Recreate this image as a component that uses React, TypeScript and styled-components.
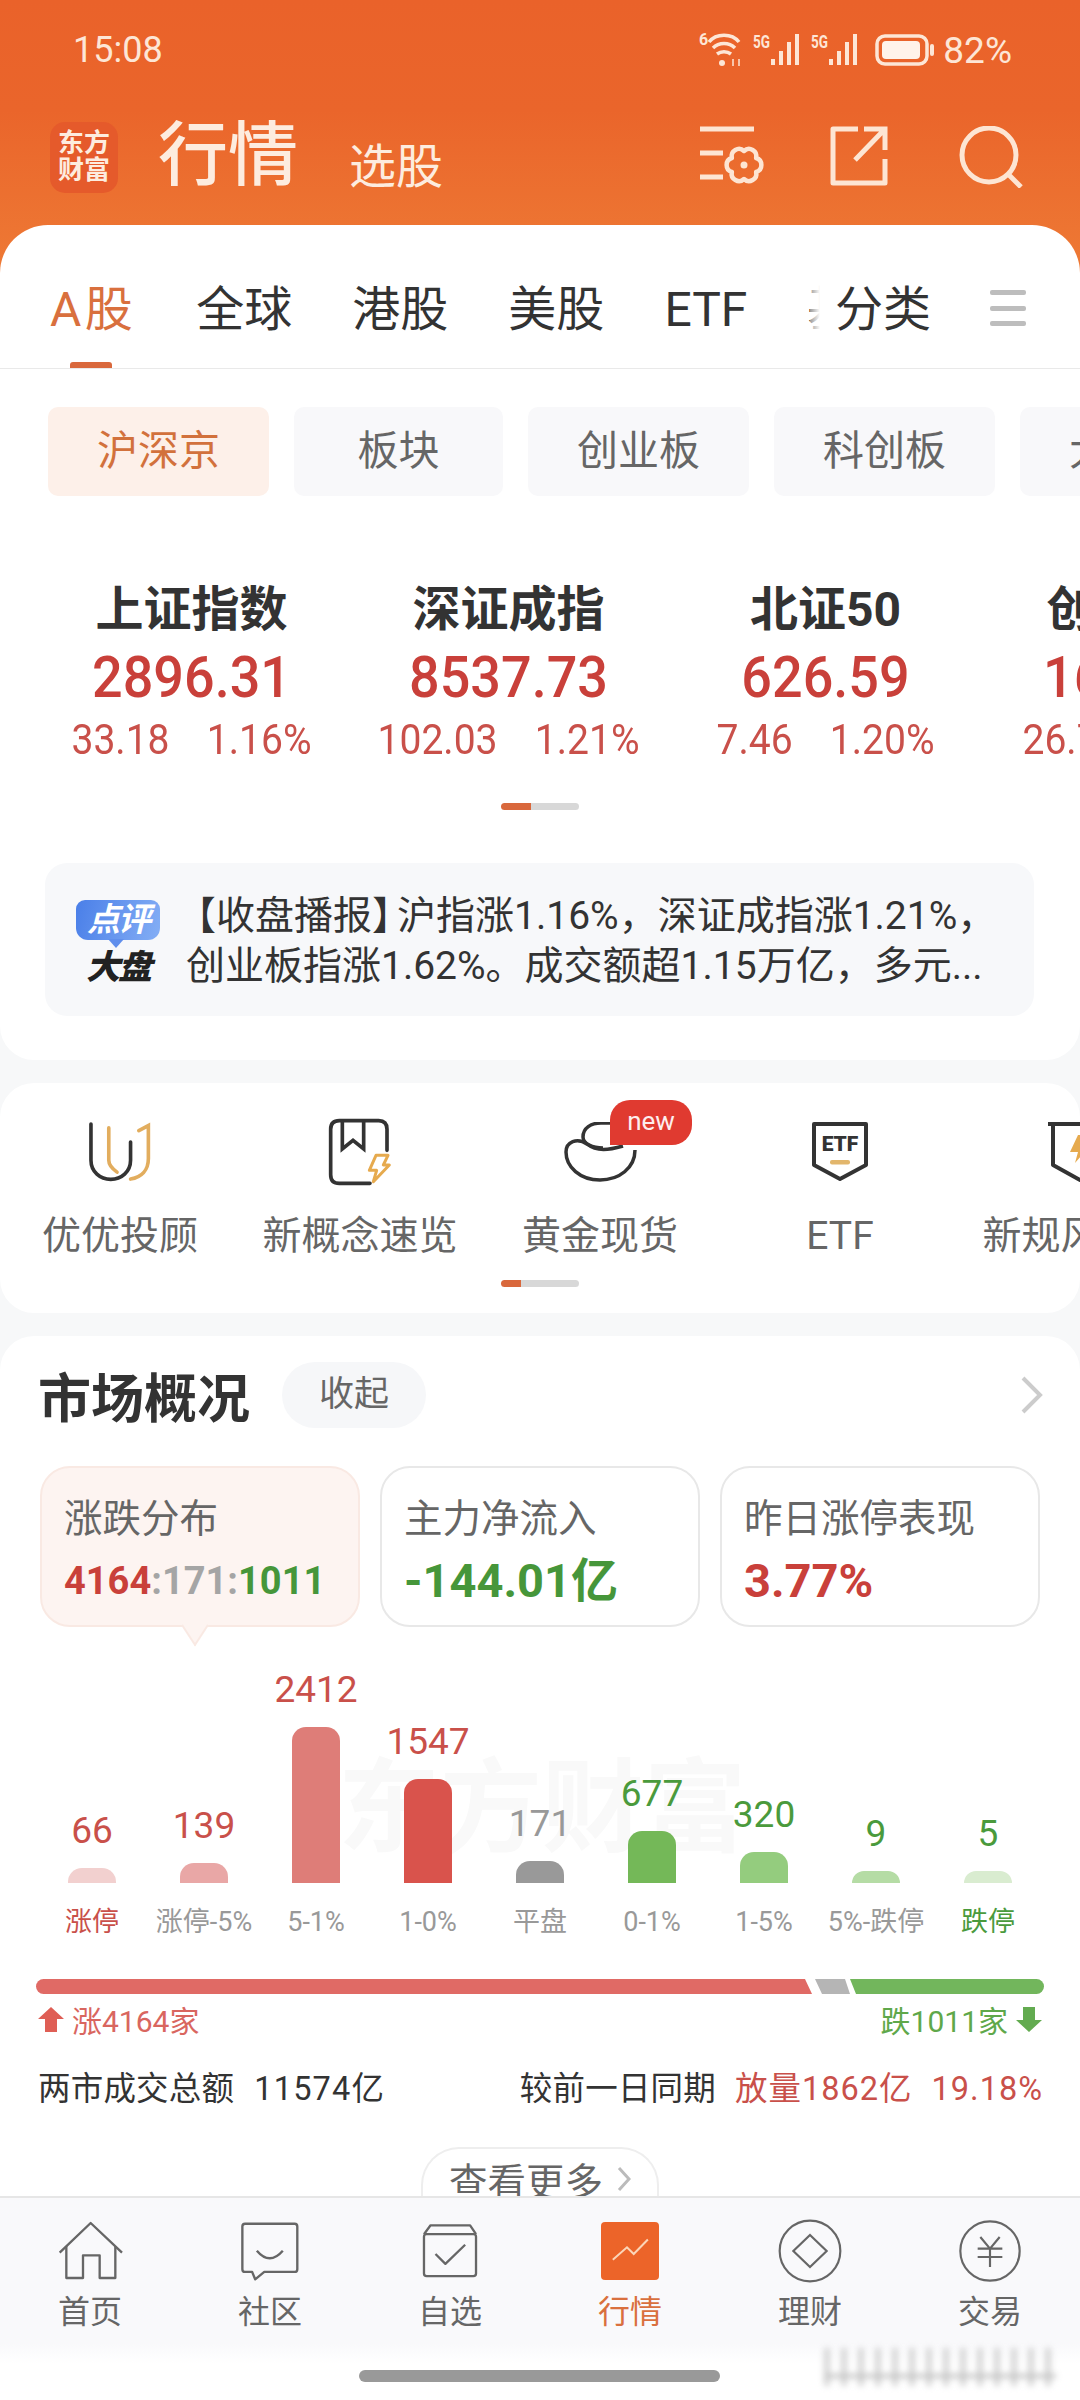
import styled, { createGlobalStyle } from "styled-components";

const GlobalStyle = createGlobalStyle`
  html, body {
    margin: 0;
    padding: 0;
    background: #fff;
    font-family: Roboto, "Noto Sans CJK SC", sans-serif;
    color: #333;
  }
`;

const Page = styled.div`
  width: 1080px;
  height: 2400px;
  display: flex;
  flex-direction: column;
  overflow: hidden;
  background: linear-gradient(#ea622a 0, #ea652b 110px, #ee7a35 275px, #f7f8f9 275px);
`;

const Scroll = styled.div`
  height: 2196px;
  flex: none;
  overflow: hidden;
`;

const StatusBar = styled.div`
  height: 100px;
  display: flex;
  align-items: center;
  justify-content: space-between;
  padding: 0 68px 0 73px;
  color: #fde6d6;
  font-size: 36px;
`;

const StatusIcons = styled.div`
  display: flex;
  align-items: center;
  gap: 8px;
  font-size: 37px;
`;

const BatteryWrap = styled.div`
  display: flex;
  margin-left: 6px;
`;

const TitleBar = styled.div`
  height: 125px;
  display: flex;
  padding-left: 50px;
  color: #fdecdf;
`;

const Logo = styled.div`
  width: 68px;
  height: 71px;
  margin-top: 22px;
  border-radius: 15px;
  background: #e55a2b;
  font-size: 26px;
  line-height: 27px;
  font-weight: 700;
  text-align: center;
  padding-top: 8px;
  box-sizing: border-box;
`;

const PageTitle = styled.div`
  margin-left: 40px;
  font-size: 70px;
  line-height: 112px;
  font-weight: 500;
`;

const SubTitle = styled.div`
  margin-left: 51px;
  font-size: 47px;
  line-height: 134px;
`;

const HeadIcons = styled.div`
  margin-left: auto;
  margin-right: 57px;
  display: flex;
  align-items: flex-start;
  gap: 65px;
  padding-top: 26px;
  svg:last-child {
    margin-left: 6px;
  }
`;

const Card = styled.section`
  background: #fff;
  border-radius: 34px;
  margin-top: 23px;
`;

const MainCard = styled(Card)`
  margin-top: 0;
  border-radius: 48px 48px 34px 34px;
  padding-bottom: 44px;
`;

const TabRow = styled.div`
  height: 144px;
  box-sizing: border-box;
  border-bottom: 1.5px solid #e9e9e9;
  display: flex;
  align-items: flex-start;
  padding: 58px 54px 0 50px;
`;

const TabScroller = styled.div`
  position: relative;
  flex: none;
  width: 770px;
  height: 85px;
  display: flex;
  gap: 60px;
  overflow: hidden;
  &::after {
    content: "";
    position: absolute;
    right: 0;
    top: 0;
    height: 60px;
    width: 10px;
    background: linear-gradient(90deg, rgba(255, 255, 255, 0.5), #fff);
  }
`;

const Tab = styled.div<{ $active?: boolean }>`
  position: relative;
  flex: none;
  height: 85px;
  font-size: 48px;
  line-height: 54px;
  color: ${(p) => (p.$active ? "#d9703e" : "#333")};
  letter-spacing: ${(p) => (p.$active ? "3.5px" : "0")};
  ${(p) =>
    p.$active &&
    `&::after {
      content: "";
      position: absolute;
      left: 20px;
      bottom: 0;
      width: 42px;
      height: 6px;
      border-radius: 3px 3px 0 0;
      background: #d9683c;
    }`}
`;

const FixedTab = styled(Tab)`
  margin-left: 15px;
`;

const MenuBars = styled.div`
  margin-left: auto;
  width: 36px;
  height: 36px;
  margin-top: 7px;
  display: flex;
  flex-direction: column;
  justify-content: space-between;
  i {
    display: block;
    height: 5px;
    border-radius: 2px;
    background: #bdbdbd;
  }
`;

const ChipRow = styled.div`
  display: flex;
  gap: 25px;
  margin-top: 38px;
  padding-left: 48px;
  overflow: hidden;
`;

const Chip = styled.div<{ $active?: boolean }>`
  flex: none;
  min-width: 209px;
  height: 89px;
  box-sizing: border-box;
  padding: 0 49px;
  border-radius: 10px;
  text-align: center;
  font-size: 41px;
  line-height: 89px;
  background: ${(p) => (p.$active ? "#fdf0e9" : "#f8f8fa")};
  color: ${(p) => (p.$active ? "#d2713c" : "#666")};
`;

const IndexRow = styled.div`
  display: flex;
  margin-top: 84px;
  padding-left: 33px;
  overflow: hidden;
`;

const IndexCell = styled.div`
  flex: none;
  width: 317px;
  text-align: center;
  white-space: nowrap;
`;

const IndexName = styled.div`
  font-size: 48px;
  line-height: 60px;
  font-weight: 700;
  color: #333;
`;

const IndexValue = styled.div`
  font-size: 58px;
  line-height: 74px;
  font-weight: 500;
  color: #c9403a;
  transform: scaleX(0.93);
`;

const IndexChange = styled.div`
  font-size: 42px;
  line-height: 52px;
  color: #c9504a;
  display: flex;
  justify-content: center;
  gap: 40px;
  transform: scaleX(0.93);
`;

const Pager = styled.div<{ $fill: number; $top: number }>`
  width: 78px;
  height: 7px;
  margin: ${(p) => p.$top}px auto 0;
  border-radius: 4px;
  background: linear-gradient(90deg, #d9683c ${(p) => p.$fill}px, #d8d8d8 ${(p) => p.$fill}px);
`;

const News = styled.div`
  height: 153px;
  margin: 53px 46px 0 45px;
  border-radius: 22px;
  background: #f7f8fa;
  display: flex;
  padding-left: 31px;
`;

const NewsBadge = styled.div`
  flex: none;
  width: 84px;
  padding-top: 37px;
  text-align: center;
  font-weight: 700;
  font-style: italic;
`;

const NewsBubble = styled.div`
  position: relative;
  height: 40px;
  border-radius: 9px 9px 12px 12px;
  background: linear-gradient(105deg, #4a7fe8, #84aef5);
  color: #fff;
  font-size: 33px;
  letter-spacing: -2px;
  line-height: 40px;
  &::after {
    content: "";
    position: absolute;
    left: 32px;
    bottom: -8px;
    border-left: 8px solid transparent;
    border-right: 8px solid transparent;
    border-top: 9px solid #5f8eec;
  }
`;

const NewsBig = styled.div`
  margin-top: 12px;
  font-size: 34px;
  letter-spacing: -2px;
  line-height: 30px;
  font-weight: 900;
  color: #222;
`;

const NewsText = styled.div`
  margin-left: 26px;
  padding-top: 28px;
  font-size: 39px;
  line-height: 50px;
  color: #333;
  white-space: nowrap;
`;

const OpenBracket = styled.span`
  margin-left: -9px;
`;

const CloseBracket = styled.span`
  margin-right: -14px;
`;

const NavRow = styled.div`
  display: flex;
  padding-top: 36px;
  overflow: hidden;
`;

const NavItem = styled.div`
  flex: none;
  width: 240px;
  display: flex;
  flex-direction: column;
  align-items: center;
  white-space: nowrap;
  position: relative;
`;

const NavIcon = styled.div`
  height: 66px;
  display: flex;
  align-items: center;
  justify-content: center;
`;

const NavLabel = styled.div`
  margin-top: 26px;
  font-size: 39px;
  line-height: 50px;
  color: #666;
`;

const NewBadge = styled.div`
  position: absolute;
  left: 130px;
  top: -19px;
  width: 82px;
  height: 45px;
  border-radius: 20px 20px 20px 0;
  background: #e03a30;
  color: #fdeeee;
  font-size: 26px;
  line-height: 42px;
  text-align: center;
`;

const NavPad = styled.div`
  height: 26px;
`;

const MarketCard = styled(Card)`
  border-radius: 34px 34px 0 0;
  padding-top: 26px;
  height: 900px;
`;

const MarketHead = styled.div`
  height: 66px;
  display: flex;
  align-items: center;
  padding: 0 37px 0 38px;
`;

const MarketTitle = styled.h2`
  margin: 0;
  font-size: 53px;
  font-weight: 700;
  color: #333;
`;

const FoldPill = styled.div`
  margin-left: 32px;
  width: 144px;
  height: 66px;
  border-radius: 33px;
  background: #f6f7f9;
  font-size: 35px;
  line-height: 66px;
  text-align: center;
  color: #666;
`;

const HeadArrow = styled.svg`
  margin-left: auto;
`;

const Tiles = styled.div`
  display: flex;
  gap: 20px;
  margin: 38px 40px 0;
`;

const Tile = styled.div<{ $active?: boolean }>`
  position: relative;
  flex: none;
  width: 320px;
  height: 161px;
  box-sizing: border-box;
  padding: 26px 0 0 22px;
  border-radius: 30px;
  border: 2px solid ${(p) => (p.$active ? "#f9e9e3" : "#e8e8e8")};
  background: ${(p) => (p.$active ? "#fdf4f1" : "#fff")};
  ${(p) =>
    p.$active &&
    `&::after {
      content: "";
      position: absolute;
      left: 141px;
      bottom: -13px;
      width: 22px;
      height: 22px;
      background: #fdf4f1;
      border-right: 2px solid #f9e9e3;
      border-bottom: 2px solid #f9e9e3;
      transform: rotate(45deg) skew(12deg, 12deg);
    }`}
`;

const TileLabel = styled.div`
  font-size: 38.5px;
  line-height: 50px;
  color: #666;
`;

const TileValue = styled.div<{ $small?: boolean; $color: string }>`
  margin-top: 8px;
  font-size: ${(p) => (p.$small ? 38 : 47)}px;
  line-height: 58px;
  font-weight: 700;
  color: ${(p) => p.$color};
  white-space: nowrap;
`;

const Part = styled.span<{ $color: string }>`
  color: ${(p) => p.$color};
`;

const Chart = styled.div`
  position: relative;
  height: 256px;
  margin-left: 36px;
  display: grid;
  grid-template-columns: repeat(9, 112px);
  align-items: end;
`;

const ChartMark = styled.div`
  position: absolute;
  left: 302px;
  top: 122px;
  font-size: 102px;
  line-height: 120px;
  font-weight: 700;
  color: #f9f9f9;
  white-space: nowrap;
`;

const Column = styled.div`
  position: relative;
  display: flex;
  flex-direction: column;
  align-items: center;
`;

const BarValue = styled.div<{ $color: string }>`
  font-size: 37px;
  line-height: 44px;
  margin-bottom: 15px;
  color: ${(p) => p.$color};
`;

const Bar = styled.div<{ $h: number; $color: string }>`
  width: 48px;
  height: ${(p) => p.$h}px;
  border-radius: 14px 14px 0 0;
  background: ${(p) => p.$color};
`;

const BarLabels = styled.div`
  margin: 19px 0 0 36px;
  display: grid;
  grid-template-columns: repeat(9, 112px);
`;

const BarLabel = styled.div<{ $color: string }>`
  font-size: 27px;
  line-height: 40px;
  text-align: center;
  white-space: nowrap;
  color: ${(p) => p.$color};
`;

const Split = styled.div`
  display: flex;
  height: 15px;
  margin: 37px 36px 0;
`;

const SplitRed = styled.div`
  width: 776px;
  background: #e06a65;
  border-radius: 8px 0 0 8px;
  clip-path: polygon(0 0, calc(100% - 7px) 0, 100% 100%, 0 100%);
`;

const SplitGrey = styled.div`
  width: 41px;
  background: #b5b5b5;
  clip-path: polygon(3px 0, calc(100% - 8px) 0, calc(100% - 3px) 100%, 10px 100%);
`;

const SplitGreen = styled.div`
  flex: 1;
  margin-left: -3px;
  background: #72b65c;
  border-radius: 0 8px 8px 0;
  clip-path: polygon(0 0, 100% 0, 100% 100%, 6px 100%);
`;

const Legend = styled.div`
  display: flex;
  justify-content: space-between;
  align-items: center;
  margin: 5px 38px 0;
  height: 40px;
  font-size: 30px;
`;

const LegendSide = styled.div<{ $color: string }>`
  display: flex;
  align-items: center;
  gap: 8px;
  color: ${(p) => p.$color};
`;

const Stats = styled.div`
  display: flex;
  justify-content: space-between;
  margin: 28px 37px 0 38px;
  font-size: 32.5px;
  letter-spacing: 0.2px;
  line-height: 44px;
  color: #333;
  white-space: nowrap;
`;

const StatNumber = styled.span`
  margin-left: 20px;
  letter-spacing: 1.2px;
`;

const StatRed = styled.span`
  color: #c9504a;
  margin-left: 19px;
  letter-spacing: 1px;
`;

const MorePill = styled.div`
  width: 238px;
  height: 62px;
  margin: 36px auto 0;
  box-sizing: border-box;
  border: 2px solid #eee;
  border-bottom: none;
  border-radius: 38px 38px 0 0;
  display: flex;
  align-items: center;
  justify-content: center;
  gap: 14px;
  font-size: 38.5px;
  color: #666;
`;

const TabBar = styled.nav`
  position: relative;
  flex: 1;
  border-top: 2px solid #e6e6e6;
  box-sizing: border-box;
  background: linear-gradient(#f9f9fb 0, #f9f9fb 72%, #fff 82%);
  display: grid;
  grid-template-columns: repeat(6, 180px);
`;

const BarTab = styled.div<{ $active?: boolean }>`
  display: flex;
  flex-direction: column;
  align-items: center;
  padding-top: 20px;
  font-size: 32px;
  line-height: 44px;
  color: ${(p) => (p.$active ? "#d9703e" : "#666")};
`;

const BarTabIcon = styled.div`
  height: 66px;
  margin-bottom: 6px;
  display: flex;
  align-items: center;
  justify-content: center;
`;

const HomeBar = styled.div`
  position: absolute;
  left: 359px;
  top: 172px;
  width: 361px;
  height: 12px;
  border-radius: 6px;
  background: #999;
`;

const Smudge = styled.div`
  position: absolute;
  left: 824px;
  top: 150px;
  width: 232px;
  height: 38px;
  filter: blur(3px);
  opacity: 0.5;
  background:
    linear-gradient(#888, #888) 0 26px / 100% 4px no-repeat,
    repeating-linear-gradient(90deg, #aaa 0 6px, transparent 6px 17px);
`;

const LegendArrow = styled.svg<{ $down?: boolean }>`
  transform: ${(p) => (p.$down ? "rotate(180deg)" : "none")};
`;

const fan = (lobes: number, cx: number, cy: number, r: number) => {
  const pts = Array.from({ length: lobes }, (_, i) => {
    const a = (Math.PI * 2 * i) / lobes - Math.PI / 2;
    return [cx + r * Math.cos(a), cy + r * Math.sin(a)];
  });
  const arc = r * 0.52;
  return (
    `M${pts[0][0].toFixed(1)} ${pts[0][1].toFixed(1)}` +
    pts
      .slice(1)
      .concat([pts[0]])
      .map((p) => `A${arc} ${arc} 0 0 1 ${p[0].toFixed(1)} ${p[1].toFixed(1)}`)
      .join("") +
    "Z"
  );
};

const Wifi = () => (
  <svg width="46" height="36" viewBox="0 0 46 36" fill="none" stroke="#fde6d6">
    <text x="0" y="13" fontSize="16" fontWeight="700" fill="#fde6d6" stroke="none">6</text>
    <path d="M10 10C17 1 33 1 40 10" strokeWidth="3.5" />
    <path d="M14 16C20 10 30 10 36 16" strokeWidth="3.5" />
    <path d="M18 22C22 19 28 19 32 22" strokeWidth="3.5" />
    <circle cx="23" cy="31" r="3" fill="#fde6d6" stroke="none" />
    <path d="M34 27v7M40 27v7" strokeWidth="1.5" />
  </svg>
);

const Signal = () => (
  <svg width="50" height="34" viewBox="0 0 50 34" fill="#fde6d6">
    <text x="0" y="15" fontSize="18" fontWeight="700" textLength="17" lengthAdjust="spacingAndGlyphs">5G</text>
    <rect x="18" y="26" width="4" height="6" />
    <rect x="26" y="18" width="4" height="14" />
    <rect x="34" y="9" width="4" height="23" />
    <rect x="42" y="1" width="4" height="31" />
  </svg>
);

const Battery = () => (
  <svg width="60" height="32" viewBox="0 0 60 32" fill="none">
    <rect x="2" y="2" width="50" height="28" rx="8" stroke="#fde6d6" strokeWidth="3.5" />
    <rect x="7" y="7" width="38" height="18" rx="4" fill="#fff3ea" />
    <rect x="55" y="10" width="4" height="12" rx="2" fill="#fde6d6" />
  </svg>
);

const SettingsIcon = () => (
  <svg width="66" height="62" viewBox="0 0 66 62" fill="none" stroke="#fde5d3" strokeWidth="5">
    <path d="M1 3H55M1 27H24M1 51H24" />
    <path d={fan(6, 45, 39, 14)} strokeWidth="4.5" strokeLinejoin="round" />
    <circle cx="45" cy="39" r="3.5" fill="#fde5d3" stroke="none" />
  </svg>
);

const ShareIcon = () => (
  <svg width="58" height="60" viewBox="0 0 58 60" fill="none" stroke="#fde5d3" strokeWidth="5">
    <path d="M28 3H3V57H55V33" strokeLinejoin="round" />
    <path d="M34 3H55V24M55 3L25 34" />
  </svg>
);

const SearchIcon = () => (
  <svg width="64" height="62" viewBox="0 0 64 62" fill="none" stroke="#fde5d3" strokeWidth="5">
    <circle cx="30" cy="29" r="27" />
    <path d="M49 48L62 61" />
  </svg>
);

const UIcon = () => (
  <svg width="68" height="66" viewBox="175 65 200 200" fill="none" strokeWidth="11" strokeLinecap="round">
    <path d="M187 80V190C187 225 215 248 247 248S307 225 307 190V135" stroke="#333" />
    <path d="M241 92V190C241 205 252 216 266 226" stroke="#e2ad5e" />
    <path d="M332 100L361 85V185C361 220 340 242 307 247" stroke="#e2ad5e" />
  </svg>
);

const BookIcon = () => (
  <svg width="66" height="70" viewBox="895 50 198 210" fill="none" strokeWidth="11">
    <path d="M1024 249H932Q906 249 906 223V87Q906 61 932 61H1050Q1075 61 1075 87V150" stroke="#333" strokeLinecap="round" />
    <path d="M941 61V146L973 120L1005 146V61" stroke="#333" />
    <path d="M1042 165H1078L1064 194H1082L1034 244L1044 210H1022Z" stroke="#e6aa4e" strokeWidth="9" strokeLinejoin="round" />
  </svg>
);

const IngotIcon = () => (
  <svg width="74" height="60" viewBox="0 0 74 60" fill="none" stroke="#333" strokeWidth="3.5">
    <path d="M72 28C72 46 56 58 37 58C17 58 3 45 3 30C3 20 14 15 24 22C34 30 46 28 60 24" />
    <path d="M20 15C20 6 28 1 38 1H50M20 15C20 22 30 26 40 26" />
  </svg>
);

const EtfIcon = () => (
  <svg width="58" height="62" viewBox="0 0 58 62" fill="none">
    <path d="M3 3H55V44L29 58L3 44Z" stroke="#333" strokeWidth="4" strokeLinejoin="round" />
    <text x="29" y="30" textAnchor="middle" fontSize="21" fontWeight="900" fill="#333">ETF</text>
    <rect x="19" y="39" width="20" height="4.5" rx="2" fill="#e2b66c" />
  </svg>
);

const RiskIcon = () => (
  <svg width="64" height="62" viewBox="0 0 64 62" fill="none">
    <path d="M0 3H64" stroke="#333" strokeWidth="4" />
    <path d="M5 3V44L32 59L59 44V3" stroke="#333" strokeWidth="4" strokeLinejoin="round" />
    <path d="M30 14L22 31H30L27 42L40 27H32L36 14Z" fill="#e6aa4e" />
  </svg>
);

const HomeIcon = () => (
  <svg width="65" height="60" viewBox="80 60 195 178" fill="none" stroke="#666" strokeWidth="7" strokeLinejoin="round">
    <path d="M85 154L178 65L272 154" />
    <path d="M105 134V230H155V162H205V230H252V134" />
  </svg>
);

const ChatIcon = () => (
  <svg width="60" height="60" viewBox="630 62 178 178" fill="none" stroke="#666" strokeWidth="7" strokeLinejoin="round">
    <path d="M645 70H792Q800 70 800 78V205Q800 213 792 213H702L675 235L666 213H645Q637 213 637 205V78Q637 70 645 70Z" />
    <path d="M680 150Q718 195 757 150" />
  </svg>
);

const BoxIcon = () => (
  <svg width="56" height="56" viewBox="1172 62 170 168" fill="none" stroke="#666" strokeWidth="7" strokeLinejoin="round">
    <path d="M1178 95L1198 68H1318L1336 95" />
    <rect x="1178" y="95" width="158" height="127" rx="8" />
    <path d="M1213 155L1243 185L1303 127" />
  </svg>
);

const MarketIcon = () => (
  <svg width="58" height="58" viewBox="123 60 172 172" fill="none">
    <rect x="123" y="60" width="172" height="172" rx="12" fill="#ec6429" />
    <path d="M158 172L200 135L220 155L262 112" stroke="#fbd5b8" strokeWidth="6" />
  </svg>
);

const CoinIcon = () => (
  <svg width="64" height="64" viewBox="652 52 192 192" fill="none" stroke="#666" strokeWidth="6.5">
    <circle cx="748" cy="148" r="91" />
    <path d="M748 100L798 148L748 196L698 148Z" />
  </svg>
);

const YuanIcon = () => (
  <svg width="62" height="62" viewBox="1194 54 186 186" fill="none" stroke="#666" strokeWidth="6.5">
    <circle cx="1287" cy="147" r="89" />
    <path d="M1258 105L1287 140L1316 105M1250 140H1324M1250 165H1324M1287 140V195" />
  </svg>
);

const ArrowUp = ({ down }: { down?: boolean }) => (
  <LegendArrow $down={down} width="26" height="25" viewBox="0 0 26 25" fill={down ? "#63ab50" : "#df5e55"}>
    <path d="M13 0L26 12H19V25H7V12H0Z" />
  </LegendArrow>
);

const indexes = [
  { name: "上证指数", value: "2896.31", diff: "33.18", pct: "1.16%" },
  { name: "深证成指", value: "8537.73", diff: "102.03", pct: "1.21%" },
  { name: "北证50", value: "626.59", diff: "7.46", pct: "1.20%" },
  { name: "创业板指", value: "1675.97", diff: "26.72", pct: "1.62%" },
];

const red = "#c9504a";
const green = "#4a9a3c";
const grey = "#999";

const bars = [
  { value: "66", h: 15, fill: "#f2d0cf", color: red, label: "涨停", labelColor: red },
  { value: "139", h: 20, fill: "#e9a7a6", color: red, label: "涨停-5%", labelColor: grey },
  { value: "2412", h: 156, fill: "#de7d78", color: red, label: "5-1%", labelColor: grey },
  { value: "1547", h: 104, fill: "#d9534c", color: red, label: "1-0%", labelColor: grey },
  { value: "171", h: 22, fill: "#999", color: grey, label: "平盘", labelColor: grey },
  { value: "677", h: 52, fill: "#74b858", color: green, label: "0-1%", labelColor: grey },
  { value: "320", h: 31, fill: "#94cc7e", color: green, label: "1-5%", labelColor: grey },
  { value: "9", h: 12, fill: "#b5dca5", color: green, label: "5%-跌停", labelColor: grey },
  { value: "5", h: 12, fill: "#d9ecd0", color: green, label: "跌停", labelColor: green },
];

export default function App() {
  return (
    <Page>
      <GlobalStyle />
      <Scroll>
        <StatusBar>
          <span>15:08</span>
          <StatusIcons>
            <Wifi />
            <Signal />
            <Signal />
            <BatteryWrap>
              <Battery />
            </BatteryWrap>
            <span>82%</span>
          </StatusIcons>
        </StatusBar>
        <TitleBar>
          <Logo>
            东方
            <br />
            财富
          </Logo>
          <PageTitle>行情</PageTitle>
          <SubTitle>选股</SubTitle>
          <HeadIcons>
            <SettingsIcon />
            <ShareIcon />
            <SearchIcon />
          </HeadIcons>
        </TitleBar>

        <MainCard>
          <TabRow>
            <TabScroller>
              <Tab $active>A股</Tab>
              <Tab>全球</Tab>
              <Tab>港股</Tab>
              <Tab>美股</Tab>
              <Tab>ETF</Tab>
              <Tab>基金</Tab>
            </TabScroller>
            <FixedTab>分类</FixedTab>
            <MenuBars>
              <i />
              <i />
              <i />
            </MenuBars>
          </TabRow>

          <ChipRow>
            <Chip $active>沪深京</Chip>
            <Chip>板块</Chip>
            <Chip>创业板</Chip>
            <Chip>科创板</Chip>
            <Chip>大盘股</Chip>
          </ChipRow>

          <IndexRow>
            {indexes.map((x) => (
              <IndexCell key={x.name}>
                <IndexName>{x.name}</IndexName>
                <IndexValue>{x.value}</IndexValue>
                <IndexChange>
                  <span>{x.diff}</span>
                  <span>{x.pct}</span>
                </IndexChange>
              </IndexCell>
            ))}
          </IndexRow>
          <Pager $fill={30} $top={37} />

          <News>
            <NewsBadge>
              <NewsBubble>点评</NewsBubble>
              <NewsBig>大盘</NewsBig>
            </NewsBadge>
            <NewsText>
              <OpenBracket>【</OpenBracket>收盘播报<CloseBracket>】</CloseBracket>沪指涨1.16%，深证成指涨1.21%，
              <br />
              创业板指涨1.62%。成交额超1.15万亿，多元...
            </NewsText>
          </News>
        </MainCard>

        <Card>
          <NavRow>
            <NavItem>
              <NavIcon>
                <UIcon />
              </NavIcon>
              <NavLabel>优优投顾</NavLabel>
            </NavItem>
            <NavItem>
              <NavIcon>
                <BookIcon />
              </NavIcon>
              <NavLabel>新概念速览</NavLabel>
            </NavItem>
            <NavItem>
              <NavIcon>
                <IngotIcon />
              </NavIcon>
              <NewBadge>new</NewBadge>
              <NavLabel>黄金现货</NavLabel>
            </NavItem>
            <NavItem>
              <NavIcon>
                <EtfIcon />
              </NavIcon>
              <NavLabel>ETF</NavLabel>
            </NavItem>
            <NavItem>
              <NavIcon>
                <RiskIcon />
              </NavIcon>
              <NavLabel>新规风向标</NavLabel>
            </NavItem>
          </NavRow>
          <Pager $fill={20} $top={19} />
          <NavPad />
        </Card>

        <MarketCard>
          <MarketHead>
            <MarketTitle>市场概况</MarketTitle>
            <FoldPill>收起</FoldPill>
            <HeadArrow width="22" height="38" viewBox="0 0 22 38" fill="none" stroke="#ccc" strokeWidth="4">
              <path d="M2 2L19 19L2 36" />
            </HeadArrow>
          </MarketHead>

          <Tiles>
            <Tile $active>
              <TileLabel>涨跌分布</TileLabel>
              <TileValue $small $color={green}>
                <Part $color="#c9403a">4164</Part>
                <Part $color="#a5a5a5">:171:</Part>
                <Part $color="#46963a">1011</Part>
              </TileValue>
            </Tile>
            <Tile>
              <TileLabel>主力净流入</TileLabel>
              <TileValue $color="#46963a">-144.01亿</TileValue>
            </Tile>
            <Tile>
              <TileLabel>昨日涨停表现</TileLabel>
              <TileValue $color="#c9403a">3.77%</TileValue>
            </Tile>
          </Tiles>

          <Chart>
            <ChartMark>东方财富</ChartMark>
            {bars.map((b) => (
              <Column key={b.label}>
                <BarValue $color={b.color}>{b.value}</BarValue>
                <Bar $h={b.h} $color={b.fill} />
              </Column>
            ))}
          </Chart>
          <BarLabels>
            {bars.map((b) => (
              <BarLabel key={b.label} $color={b.labelColor}>
                {b.label}
              </BarLabel>
            ))}
          </BarLabels>

          <Split>
            <SplitRed />
            <SplitGrey />
            <SplitGreen />
          </Split>

          <Legend>
            <LegendSide $color="#d9665f">
              <ArrowUp />
              <span>涨4164家</span>
            </LegendSide>
            <LegendSide $color="#5fa84a">
              <span>跌1011家</span>
              <ArrowUp down />
            </LegendSide>
          </Legend>

          <Stats>
            <span>
              两市成交总额<StatNumber>11574亿</StatNumber>
            </span>
            <span>
              较前一日同期
              <StatRed>放量1862亿</StatRed>
              <StatRed>19.18%</StatRed>
            </span>
          </Stats>

          <MorePill>
            <span>查看更多</span>
            <svg width="14" height="26" viewBox="0 0 14 26" fill="none" stroke="#bbb" strokeWidth="3">
              <path d="M2 2L12 13L2 24" />
            </svg>
          </MorePill>
        </MarketCard>
      </Scroll>

      <TabBar>
        <BarTab>
          <BarTabIcon>
            <HomeIcon />
          </BarTabIcon>
          首页
        </BarTab>
        <BarTab>
          <BarTabIcon>
            <ChatIcon />
          </BarTabIcon>
          社区
        </BarTab>
        <BarTab>
          <BarTabIcon>
            <BoxIcon />
          </BarTabIcon>
          自选
        </BarTab>
        <BarTab $active>
          <BarTabIcon>
            <MarketIcon />
          </BarTabIcon>
          行情
        </BarTab>
        <BarTab>
          <BarTabIcon>
            <CoinIcon />
          </BarTabIcon>
          理财
        </BarTab>
        <BarTab>
          <BarTabIcon>
            <YuanIcon />
          </BarTabIcon>
          交易
        </BarTab>
        <Smudge />
        <HomeBar />
      </TabBar>
    </Page>
  );
}
